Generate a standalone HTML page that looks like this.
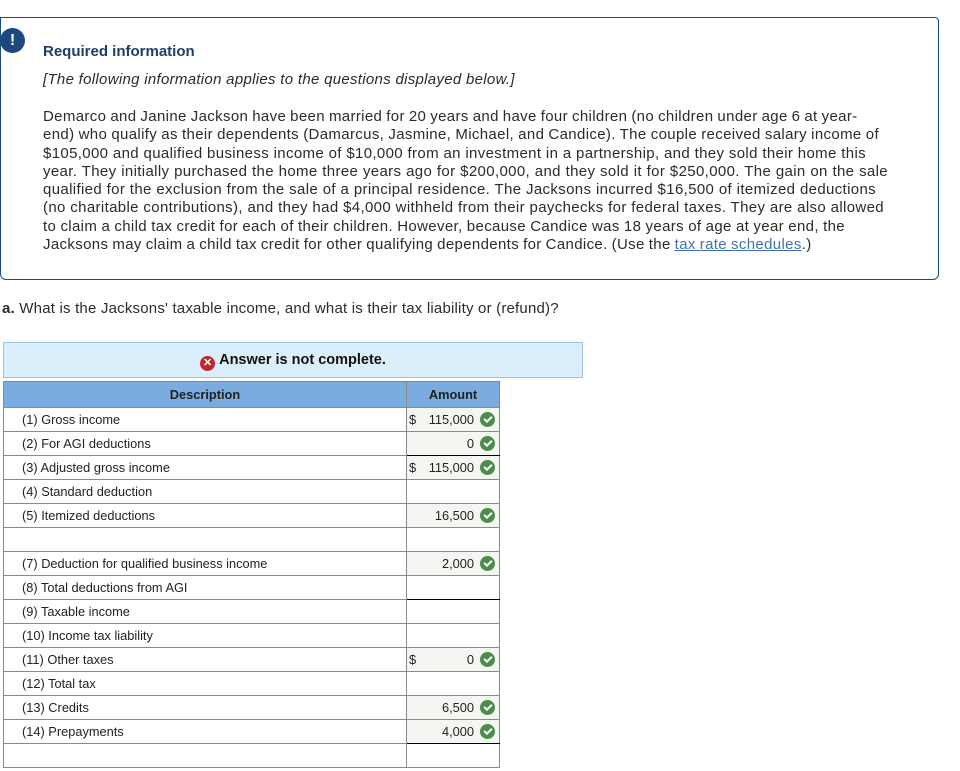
<!DOCTYPE html>
<html><head><meta charset="utf-8"><style>
body{margin:0;width:960px;height:771px;background:#fff;font-family:"Liberation Sans",sans-serif;color:#2b2b2b;position:relative;overflow:hidden}
.box{position:absolute;left:0;top:17px;width:937px;height:261px;border:1.5px solid #1c4a80;border-radius:0 4px 6px 6px}
.ic{position:absolute;left:-1px;top:10px;width:25px;height:25px;border-radius:50%;background:#1c4a80;color:#fff;font-weight:bold;font-size:16px;text-align:center;line-height:25px}
.t{position:absolute;left:43px;font-size:15px;white-space:nowrap}
.p{position:absolute;left:43px;top:108px;width:846px;font-size:15px;line-height:18.3px;letter-spacing:0.35px;word-spacing:-0.5px}
.p div{white-space:nowrap}
.j{text-align:justify;text-align-last:justify}
a{color:#3e73b5;text-decoration:underline}
.q{position:absolute;left:2px;top:300px;font-size:15px;letter-spacing:0.2px}
.ans{position:absolute;left:3px;top:342px;width:578px;height:34px;background:#dbeefb;border:1px solid #9cc3e6;text-align:center;font-weight:bold;font-size:14.5px;line-height:34px;color:#111}
.x{display:inline-block;width:15px;height:15px;border-radius:50%;background:#c0262d;color:#fff;font-size:11px;line-height:15px;vertical-align:-2px;margin-right:4px}
table{position:absolute;left:3px;top:381px;border-collapse:collapse;font-size:12.8px;color:#222}
td,th{border:1px solid #8a8a8a;height:23px;padding:0}
th{background:#7aace0;font-weight:bold;height:25px;font-size:12.8px;color:#222}
td.d{width:384px;padding-left:18px}
td.a{width:92px;position:relative}
td.g{background:#f4f7f1}
.v{position:absolute;right:25px;top:4px}
.s{position:absolute;left:2px;top:4px}
.c{position:absolute;right:4px;top:4px;width:15px;height:15px;border-radius:50%;background:#4b8c4a}
.c:after{content:"";position:absolute;left:4px;top:3.5px;width:6px;height:3px;border-left:2px solid #fff;border-bottom:2px solid #fff;transform:rotate(-45deg)}
</style></head><body>
<div class="box"><div class="ic">!</div></div>
<div class="t" style="top:43px;font-weight:bold;color:#1c3e6b">Required information</div>
<div class="t" style="top:71px;font-style:italic;letter-spacing:0.3px">[The following information applies to the questions displayed below.]</div>
<div class="p">
<div class="j" style="width:812px">Demarco and Janine Jackson have been married for 20 years and have four children (no children under age 6 at year-</div>
<div class="j" style="width:836px">end) who qualify as their dependents (Damarcus, Jasmine, Michael, and Candice). The couple received salary income of</div>
<div class="j" style="width:823px">$105,000 and qualified business income of $10,000 from an investment in a partnership, and they sold their home this</div>
<div class="j" style="width:845px">year. They initially purchased the home three years ago for $200,000, and they sold it for $250,000. The gain on the sale</div>
<div class="j" style="width:833px">qualified for the exclusion from the sale of a principal residence. The Jacksons incurred $16,500 of itemized deductions</div>
<div class="j" style="width:841px">(no charitable contributions), and they had $4,000 withheld from their paychecks for federal taxes. They are also allowed</div>
<div class="j" style="width:802px">to claim a child tax credit for each of their children. However, because Candice was 18 years of age at year end, the</div>
<div>Jacksons may claim a child tax credit for other qualifying dependents for Candice. (Use the <a>tax rate schedules</a>.)</div>
</div>
<div class="q"><b>a.</b> What is the Jacksons' taxable income, and what is their tax liability or (refund)?</div>
<div class="ans"><span class="x">✕</span>Answer is not complete.</div>
<table>
<tr><th>Description</th><th>Amount</th></tr>
<tr><td class="d">(1) Gross income</td><td class="a g"><span class="s">$</span><span class="v">115,000</span><i class="c"></i></td></tr>
<tr><td class="d">(2) For AGI deductions</td><td class="a g" style="border-bottom:1px solid #000"><span class="v">0</span><i class="c"></i></td></tr>
<tr><td class="d">(3) Adjusted gross income</td><td class="a g"><span class="s">$</span><span class="v">115,000</span><i class="c"></i></td></tr>
<tr><td class="d">(4) Standard deduction</td><td class="a"></td></tr>
<tr><td class="d">(5) Itemized deductions</td><td class="a g"><span class="v">16,500</span><i class="c"></i></td></tr>
<tr><td class="d"></td><td class="a"></td></tr>
<tr><td class="d">(7) Deduction for qualified business income</td><td class="a g"><span class="v">2,000</span><i class="c"></i></td></tr>
<tr><td class="d">(8) Total deductions from AGI</td><td class="a" style="border-bottom:1px solid #000"></td></tr>
<tr><td class="d">(9) Taxable income</td><td class="a"></td></tr>
<tr><td class="d">(10) Income tax liability</td><td class="a"></td></tr>
<tr><td class="d">(11) Other taxes</td><td class="a g"><span class="s">$</span><span class="v">0</span><i class="c"></i></td></tr>
<tr><td class="d">(12) Total tax</td><td class="a"></td></tr>
<tr><td class="d">(13) Credits</td><td class="a g"><span class="v">6,500</span><i class="c"></i></td></tr>
<tr><td class="d">(14) Prepayments</td><td class="a g" style="border-bottom:1px solid #000"><span class="v">4,000</span><i class="c"></i></td></tr>
<tr><td class="d"></td><td class="a"></td></tr>
</table>
</body></html>
